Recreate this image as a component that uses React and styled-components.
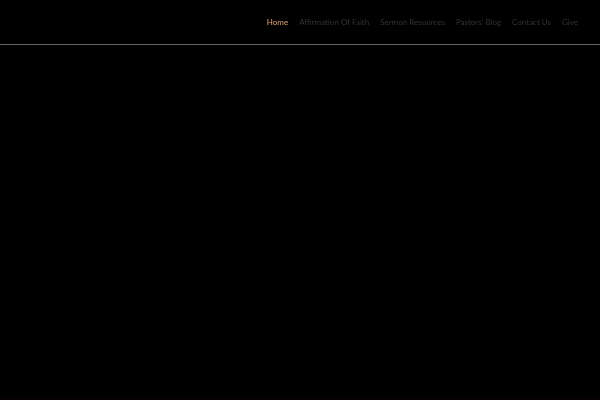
import React from 'react';
import styled, { createGlobalStyle } from 'styled-components';

const GlobalStyle = createGlobalStyle`
  * {
    box-sizing: border-box;
  }

  body {
    margin: 0;
    background-color: #000;
    font-family: Lato, 'Liberation Sans', sans-serif;
  }
`;

const Page = styled.div`
  display: flex;
  flex-direction: column;
  min-height: 100vh;
`;

const Header = styled.header`
  display: flex;
  justify-content: flex-end;
  padding: 16px 22px;
  border-bottom: 1px solid #666;
  will-change: transform;
`;

const NavList = styled.ul`
  display: flex;
  gap: 11px;
  margin: 0;
  padding: 0;
  list-style: none;
`;

const NavLink = styled.a`
  display: block;
  font-size: 8px;
  line-height: 12px;
  white-space: nowrap;
  text-decoration: none;
  color: ${props => props.$active ? '#e0a56c' : '#333'};
`;

const Hero = styled.main`
  flex: 1;
  border-bottom: 1px solid #0c0003;
`;

const links = [
  { label: 'Home', href: '#home' },
  { label: 'Affirmation Of Faith', href: '#faith' },
  { label: 'Sermon Resources', href: '#sermons' },
  { label: "Pastors' Blog", href: '#blog' },
  { label: 'Contact Us', href: '#contact' },
  { label: 'Give', href: '#give' }
];

const App = () => {
  const current = 'Home';

  return (
    <Page>
      <GlobalStyle />
      <Header>
        <nav>
          <NavList>
            {links.map(link => (
              <li key={link.href}>
                <NavLink href={link.href} $active={link.label === current}>
                  {link.label}
                </NavLink>
              </li>
            ))}
          </NavList>
        </nav>
      </Header>
      <Hero />
    </Page>
  );
};

export default App;
